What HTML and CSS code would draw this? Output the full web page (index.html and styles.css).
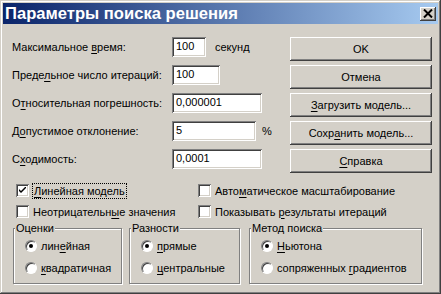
FILE: index.html
```html
<!DOCTYPE html>
<html lang="ru">
  <head>
    <meta charset="UTF-8" />
    <title>Параметры поиска решения</title>
    <link rel="stylesheet" href="styles.css">
  </head>
  <body>
    <div class="window">
      <div class="titlebar">
        <span class="title">Параметры поиска решения</span>
        <span class="close">
          <svg width="10" height="9" viewBox="0 0 10 9">
            <path d="M1 0.5 L9 8.5 M9 0.5 L1 8.5" stroke="#000" stroke-width="2" />
          </svg>
        </span>
      </div>

      <div class="content">
        <div class="main">
          <div class="fields">
            <div class="row">
              <span class="label">Максимальное <u>в</u>ремя:</span>
              <span class="input input--time">100</span>
              <span class="unit">секунд</span>
            </div>
            <div class="row">
              <span class="label">Преде<u>л</u>ьное число итераций:</span>
              <span class="input input--iter">100</span>
            </div>
            <div class="row">
              <span class="label">О<u>т</u>носительная погрешность:</span>
              <span class="input input--wide">0,000001</span>
            </div>
            <div class="row">
              <span class="label">Д<u>о</u>пустимое отклонение:</span>
              <span class="input input--dev">5</span>
              <span class="unit unit--pct">%</span>
            </div>
            <div class="row">
              <span class="label">С<u>х</u>одимость:</span>
              <span class="input input--wide">0,0001</span>
            </div>
          </div>

          <div class="buttons">
            <div class="btn">OK</div>
            <div class="btn">Отмена</div>
            <div class="btn"><u>З</u>агрузить модель...</div>
            <div class="btn">Сохр<u>а</u>нить модель...</div>
            <div class="btn"><u>С</u>правка</div>
          </div>
        </div>

        <div class="checks">
          <div class="check">
            <span class="box checked">
              <svg width="7" height="7" viewBox="0 0 7 7">
                <path d="M0 2 L0 4 L2 6 L7 1 L7 -1 L2 4 Z" fill="#000" />
              </svg>
            </span>
            <span class="focus"><u>Л</u>инейная модель</span>
          </div>
          <div class="check">
            <span class="box"></span>
            <span>Авто<u>м</u>атическое масштабирование</span>
          </div>
          <div class="check">
            <span class="box"></span>
            <span>Неотрицательн<u>ы</u>е значения</span>
          </div>
          <div class="check">
            <span class="box"></span>
            <span>Показывать <u>р</u>езультаты итераций</span>
          </div>
        </div>

        <div class="groups">
          <fieldset class="group group--est">
            <legend>Оценки</legend>
            <div class="radio"><span class="dot on"></span><span>лин<u>е</u>йная</span></div>
            <div class="radio"><span class="dot"></span><span><u>к</u>вадратичная</span></div>
          </fieldset>
          <fieldset class="group group--diff">
            <legend>Разности</legend>
            <div class="radio"><span class="dot on"></span><span><u>п</u>рямые</span></div>
            <div class="radio"><span class="dot"></span><span><u>ц</u>ентральные</span></div>
          </fieldset>
          <fieldset class="group group--method">
            <legend>Метод поиска</legend>
            <div class="radio"><span class="dot on"></span><span><u>Н</u>ьютона</span></div>
            <div class="radio"><span class="dot"></span><span>сопряженных <u>г</u>радиентов</span></div>
          </fieldset>
        </div>
      </div>
    </div>
  </body>
</html>
```

FILE: styles.css
```css
body {
  margin: 0;
  font-family: "Liberation Sans", Arial, sans-serif;
  font-size: 11px;
  color: #000;
  background: #d4d0c8;
  white-space: nowrap;
}

u {
  text-decoration: underline;
  text-underline-offset: 2px;
}

/* окно */
.window {
  width: 441px;
  height: 294px;
  box-sizing: border-box;
  padding: 3px;
  background: #d4d0c8;
  box-shadow: inset -1px -1px #404040, inset 1px 1px #d4d0c8,
    inset -2px -2px #808080, inset 2px 2px #fff;
}

.titlebar {
  height: 21px;
  display: flex;
  align-items: center;
  justify-content: space-between;
  padding: 0 2px 0 2px;
  background: linear-gradient(to right, #0a246a, #a6caf0);
}

.title {
  color: #fff;
  font-weight: bold;
  font-size: 16.6px;
}

.close {
  width: 16px;
  height: 14px;
  display: flex;
  align-items: center;
  justify-content: center;
  background: #d4d0c8;
  box-shadow: inset -1px -1px #404040, inset 1px 1px #fff,
    inset -2px -2px #808080;
}

.content {
  padding: 9px 0 0 9px;
}

.main {
  display: flex;
}

.fields {
  width: 278px;
}

.row {
  height: 28px;
  display: flex;
  align-items: center;
}

.label {
  width: 160px;
}

.input {
  height: 20px;
  box-sizing: border-box;
  padding: 3px 0 0 4px;
  background: #fff;
  box-shadow: inset 1px 1px #808080, inset -1px -1px #fff,
    inset 2px 2px #404040, inset -2px -2px #d4d0c8;
}

.input--time { width: 34px; }
.input--iter { width: 48px; }
.input--wide { width: 90px; }
.input--dev { width: 84px; }

.unit {
  margin-left: 9px;
}

.unit--pct {
  margin-left: 6px;
}

/* кнопки */
.buttons {
  padding-top: 4px;
  display: flex;
  flex-direction: column;
  gap: 4px;
}

.btn {
  width: 142px;
  height: 24px;
  display: flex;
  align-items: center;
  justify-content: center;
  background: #d4d0c8;
  box-shadow: inset -1px -1px #404040, inset 1px 1px #fff,
    inset -2px -2px #808080, inset 2px 2px #d4d0c8;
}

/* флажки */
.checks {
  margin-top: 7px;
  padding-left: 4px;
  display: grid;
  grid-template-columns: 182px auto;
}

.check {
  height: 21px;
  display: flex;
  align-items: center;
  gap: 4px;
}

.box {
  width: 13px;
  height: 13px;
  box-sizing: border-box;
  display: flex;
  align-items: center;
  justify-content: center;
  background: #fff;
  box-shadow: inset 1px 1px #808080, inset -1px -1px #fff,
    inset 2px 2px #404040, inset -2px -2px #d4d0c8;
}

.focus {
  outline: 1px dotted #000;
  outline-offset: 0;
  padding: 1px 1px;
}

/* группы */
.groups {
  display: flex;
  gap: 7px;
  padding-left: 1px;
}

.group {
  margin: 0;
  padding: 1px 0 0 11px;
  height: 62px;
  box-sizing: border-box;
  border: 1px solid #808080;
  box-shadow: 1px 1px 0 #fff, inset 1px 1px 0 #fff;
}

.group legend {
  padding: 0 1px;
  margin-left: -10px;
  background: #d4d0c8;
}

.group--est { width: 109px; }
.group--diff { width: 111px; margin-right: 2px; }
.group--method { width: 173px; }

.radio {
  height: 22px;
  display: flex;
  align-items: center;
  gap: 4px;
}

.dot {
  width: 12px;
  height: 12px;
  box-sizing: border-box;
  border-radius: 50%;
  display: flex;
  align-items: center;
  justify-content: center;
  background: #fff;
  border: 1px solid;
  border-color: #808080 #fff #fff #808080;
  box-shadow: inset 1px 1px #404040;
}

.dot.on::after {
  content: "";
  width: 4px;
  height: 4px;
  border-radius: 50%;
  background: #000;
}
```
